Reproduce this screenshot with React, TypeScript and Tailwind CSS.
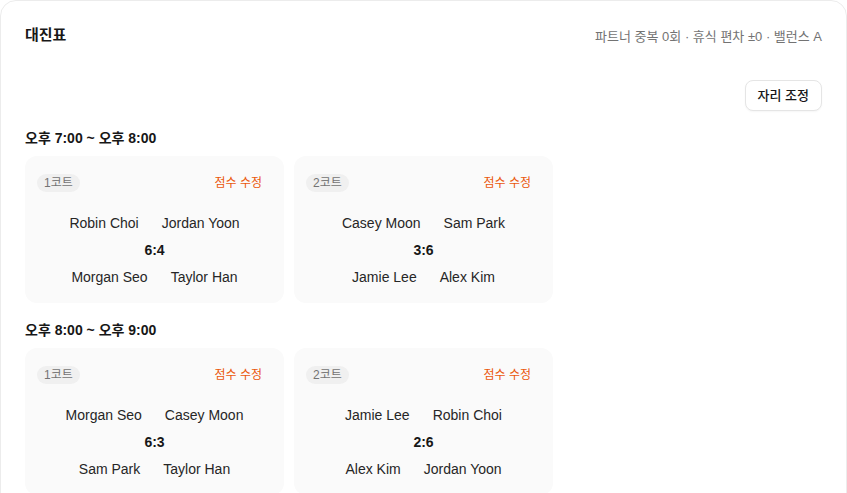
import React from 'react'

type Match = { court: string; top: [string, string]; bottom: [string, string]; score: string }
type Slot = { label: string; matches: Match[] }

const slots: Slot[] = [
  {
    label: '오후 7:00 ~ 오후 8:00',
    matches: [
      { court: '1코트', top: ['Robin Choi', 'Jordan Yoon'], bottom: ['Morgan Seo', 'Taylor Han'], score: '6:4' },
      { court: '2코트', top: ['Casey Moon', 'Sam Park'], bottom: ['Jamie Lee', 'Alex Kim'], score: '3:6' },
    ],
  },
  {
    label: '오후 8:00 ~ 오후 9:00',
    matches: [
      { court: '1코트', top: ['Morgan Seo', 'Casey Moon'], bottom: ['Sam Park', 'Taylor Han'], score: '6:3' },
      { court: '2코트', top: ['Jamie Lee', 'Robin Choi'], bottom: ['Alex Kim', 'Jordan Yoon'], score: '2:6' },
    ],
  },
]

function MatchCard({ m }: { m: Match }) {
  return (
    <div className="bg-[#fafafa] rounded-xl px-3 pt-3 pb-4">
      <div className="flex items-center justify-between h-[30px]">
        <span className="bg-[#f0f0f0] text-[#737373] text-xs rounded-full px-[7px] h-[18px] leading-[18px]">{m.court}</span>
        <button className="text-xs text-[#ea580c] px-2.5 h-[30px]">점수 수정</button>
      </div>
      <div className="mt-[15px] flex flex-col items-center gap-[7px] text-sm leading-5 text-[#262626]">
        <div className="flex gap-[23px]">
          <span>{m.top[0]}</span>
          <span>{m.top[1]}</span>
        </div>
        <div className="font-bold text-[#171717]">{m.score}</div>
        <div className="flex gap-[23px]">
          <span>{m.bottom[0]}</span>
          <span>{m.bottom[1]}</span>
        </div>
      </div>
    </div>
  )
}

export default function App() {
  return (
    <div className="min-h-screen bg-white" style={{ fontFamily: '"Liberation Sans", "Noto Sans CJK KR", sans-serif' }}>
      <div className="border border-[#ececec] rounded-2xl bg-white px-6 pt-6 pb-10">
        <div className="flex items-center justify-between h-5">
          <h1 className="text-[15px] font-semibold text-[#171717]">대진표</h1>
          <span className="text-[13px] text-[#737373] mt-1">파트너 중복 0회 · 휴식 편차 ±0 · 밸런스 A</span>
        </div>
        <div className="flex justify-end mt-[35px]">
          <button className="h-[31px] px-3 rounded-lg border border-[#e5e5e5] bg-white text-[13px] font-medium text-[#171717] shadow-[0_1px_2px_rgba(0,0,0,0.04)]">자리 조정</button>
        </div>
        <div className="flex flex-col gap-[17px] mt-[17px]">
          {slots.map(s => (
            <section key={s.label}>
              <h2 className="text-sm font-semibold leading-5 text-[#171717] mb-2">{s.label}</h2>
              <div className="grid grid-cols-3 gap-2.5">
                {s.matches.map(m => <MatchCard key={m.court} m={m} />)}
              </div>
            </section>
          ))}
        </div>
      </div>
    </div>
  )
}
